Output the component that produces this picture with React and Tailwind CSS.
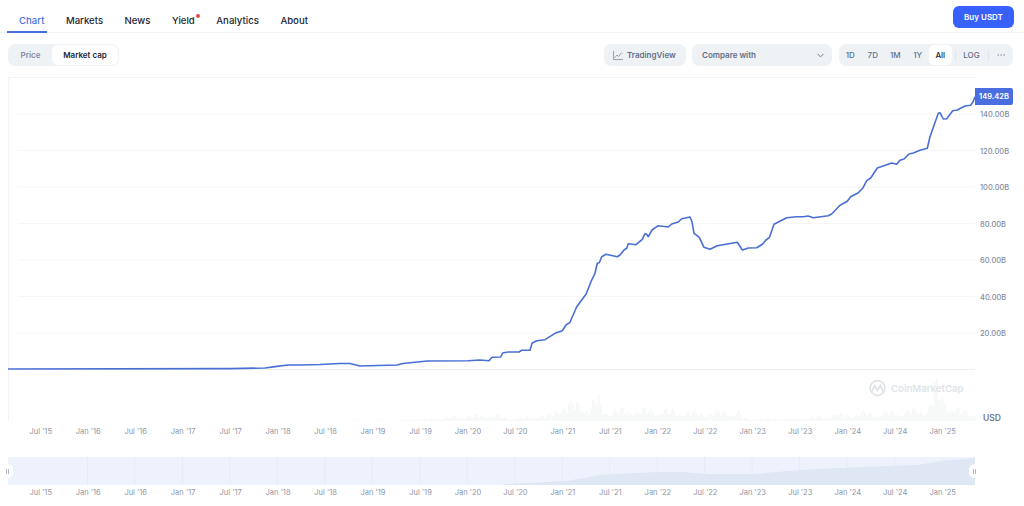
import { ChevronDown, Ellipsis } from 'lucide-react'

const tabs = ['Chart', 'Markets', 'News', 'Yield', 'Analytics', 'About']
const ranges = ['1D', '7D', '1M', '1Y', 'All']
const yLabels = ['140.00B', '120.00B', '100.00B', '80.00B', '60.00B', '40.00B', '20.00B']
const gridY = [114, 150.5, 187, 223.5, 260, 296.5, 333, 369.5]
const xLabels = [
  "Jul '15", "Jan '16", "Jul '16", "Jan '17", "Jul '17", "Jan '18", "Jul '18", "Jan '19", "Jul '19", "Jan '20",
  "Jul '20", "Jan '21", "Jul '21", "Jan '22", "Jul '22", "Jan '23", "Jul '23", "Jan '24", "Jul '24", "Jan '25",
]

// Market cap line, traced in page coordinates
const line =
  '8,369 230,368.6 265,368 275,366.6 288,365 300,365 320,364.5 340,363.5 350,363.5 360,366 397,365 403,363.5 427,361 468,360.7 ' +
  '480,360 489,360.7 492,357.3 500.7,357 502.7,353 508,352 519,352 521.7,350.3 530,350.3 532,343.3 536.7,340.7 545,339.7 555,333.3 ' +
  '562.3,330.7 566,325 570,322.3 576.7,306.7 586,294.3 591.7,280 595,273.3 597.3,263.3 599.3,262.7 601.7,256.7 606,254.3 617.3,256.7 ' +
  '620,255 624,250 626.7,248.3 628.3,243.7 636,244.7 642.3,239.3 645,233.7 646.7,234.3 648.3,236.7 652,230 658.3,225.7 668.3,227 ' +
  '671.7,224 678.3,222 681.7,218.7 690,217 692,221.7 694,233.3 699.3,237.3 704,247.3 710,249.3 717.3,245.7 737.3,242.3 742.3,250 ' +
  '748.3,248 756.7,247.7 760,245.7 762.7,244 766,240 769.3,237.7 774,224.3 786.7,217.7 796.7,216.7 803.3,216.7 808,216 813.3,217.7 ' +
  '828.3,215.7 831.7,214 840,205.3 847.3,201.3 850.7,196.7 858.3,192.7 862.7,188.3 866.7,180.7 870.7,178 877.3,168 891.7,163 ' +
  '896.7,164.3 900,160.3 904,159 909,154 913.3,153 920,150.3 927.3,148.3 930,136.7 938.3,113.3 940,112.7 943.3,119 946.7,118.7 ' +
  '952.7,110.7 957.3,110 965,106 970.7,105.3 973.3,101.3 975,96.7'

// Height of the volume envelope at a given x
const volumeStops = [
  [8, 0.3], [250, 0.4], [400, 1], [440, 4], [490, 9], [510, 3], [550, 8], [560, 20], [575, 24], [590, 18], [597, 36], [601, 14],
  [660, 14], [700, 11], [738, 12], [745, 3], [800, 3], [840, 9], [880, 11], [925, 15], [931, 30], [935, 48], [940, 32], [947, 25],
  [960, 13], [975, 12],
]

const volumeAt = (x) => {
  for (let i = 1; i < volumeStops.length; i++) {
    const [x0, h0] = volumeStops[i - 1]
    const [x1, h1] = volumeStops[i]
    if (x <= x1) return h0 + ((h1 - h0) * (x - x0)) / (x1 - x0)
  }
  return 0
}

const bars = []
for (let x = 8; x < 975; x += 2) {
  const wobble = 0.35 + 0.65 * Math.abs(Math.sin(x * 1.7) * Math.cos(x * 0.43))
  bars.push({ x, h: volumeAt(x) * wobble })
}

function Chart() {
  return (
    <svg viewBox="8 77 968 345" className="block w-[968px] h-[345px] shrink-0">
      <path d="M8.5 77.5H975.5M8.5 77.5V421.5" fill="none" stroke="#f1f3f6" />
      {gridY.map((y) => (
        <line key={y} x1="18" x2="975" y1={y} y2={y} stroke={y === 369.5 ? '#eef0f3' : '#f5f6f8'} />
      ))}
      {bars.map((b) => (
        <rect key={b.x} x={b.x} y={421 - b.h} width="1.6" height={b.h} fill="#f6f8f8" />
      ))}
      <g fill="none" stroke="#dde1e8" strokeWidth="1.6">
        <circle cx="877.5" cy="388" r="7.4" />
        <path d="M872 391.5l2.6-6 2.9 5 2.9-5 2.6 6" />
      </g>
      <text x="891" y="391.5" fontFamily="Inter, sans-serif" fontSize="9.6" fontWeight="600" fill="#e0e4ea">
        CoinMarketCap
      </text>
      <polyline points={line} fill="none" stroke="#4a6fd4" strokeWidth="1.6" strokeLinejoin="round" />
    </svg>
  )
}

function Navigator() {
  const ticks = []
  for (let x = 87.5; x < 975; x += 47.47) ticks.push(x)
  return (
    <svg viewBox="8 457 967 28" className="block w-[967px] h-[28px]">
      <rect x="8" y="457" width="967" height="28" fill="#eef2fc" />
      {ticks.map((x) => (
        <line key={x} x1={x} x2={x} y1="457" y2="485" stroke="#e6ebf5" />
      ))}
      <polygon
        points="500,485 507,484 567,481 600,475 657,472 684,472 704,474 754,474 801,470 861,467 917,465 940,461 975,458 975,485"
        fill="#dfe6f4"
      />
    </svg>
  )
}

function Handle({ className }) {
  return (
    <div className={`absolute top-[464px] w-[11px] h-[14px] rounded-full bg-white flex items-center justify-center gap-[1px] ${className}`}>
      <span className="w-[1px] h-[5px] bg-[#b4bac6]" />
      <span className="w-[1px] h-[5px] bg-[#b4bac6]" />
    </div>
  )
}

export default function App() {
  return (
    <div className="relative w-[1024px] h-[506px] overflow-hidden bg-white font-['Inter',sans-serif]">
      {/* Tabs */}
      <div className="flex h-[33px] items-start justify-between border-b border-[#f1f3f6] pr-[10px]">
        <div className="flex gap-[21.5px] pl-[19px] pt-[14px] text-[9.6px] font-medium leading-[13px]">
          {tabs.map((t) => (
            <div key={t} className={`relative ${t === 'Chart' ? 'text-[#4a6ee0]' : 'text-[#222531]'}`}>
              {t}
              {t === 'Chart' && <span className="absolute left-[-12px] right-[-3px] top-[17px] h-[1.5px] bg-[#4a6ee0]" />}
              {t === 'Yield' && <span className="absolute right-[-5px] top-0 w-[4px] h-[4px] rounded-full bg-[#e5484d]" />}
            </div>
          ))}
        </div>
        <button className="mt-[6px] h-[22px] w-[61px] rounded-[6px] bg-[#3861fb] text-white text-[8px] font-semibold">
          Buy USDT
        </button>
      </div>

      {/* Toolbar */}
      <div className="flex h-[22px] mt-[11px] pl-[8px] pr-[10px] text-[8px] font-semibold text-[#616e85]">
        <div className="flex w-[111px] rounded-[7px] bg-[#eff2f5] p-[1px]">
          <div className="flex items-center justify-center w-[43px] text-[#858ca2]">Price</div>
          <div className="flex flex-1 items-center justify-center rounded-[6px] bg-white text-[#222531]">Market cap</div>
        </div>
        <div className="flex items-center gap-[4px] ml-[485px] w-[82px] pl-[9px] rounded-[7px] bg-[#eff2f5]">
          <svg viewBox="0 0 10 9" className="w-[10px] h-[9px]" fill="none" stroke="#858ca2" strokeWidth="0.8">
            <path d="M.5 0v8.5H10M1.5 7l2.5-3 1.5 1.5L9 1.5" />
          </svg>
          TradingView
        </div>
        <div className="flex items-center justify-between ml-[6px] w-[140px] pl-[10px] pr-[6px] rounded-[7px] bg-[#eff2f5]">
          Compare with
          <ChevronDown className="w-[11px] h-[11px]" strokeWidth={2} />
        </div>
        <div className="flex items-center ml-[7px] w-[174px] rounded-[7px] bg-[#eff2f5] font-medium">
          {ranges.map((r) => (
            <div
              key={r}
              className={`flex items-center justify-center w-[22.5px] h-[20px] rounded-[5px] ${r === 'All' ? 'bg-white text-[#222531]' : ''}`}
            >
              {r}
            </div>
          ))}
          <span className="w-[1px] h-[9px] ml-[3px] bg-[#dfe3ea]" />
          <div className="flex items-center justify-center w-[32px]">LOG</div>
          <span className="w-[1px] h-[9px] bg-[#dfe3ea]" />
          <div className="flex flex-1 items-center justify-center text-[#a1a7bb]">
            <Ellipsis className="w-[10px] h-[10px]" />
          </div>
        </div>
      </div>

      {/* Main chart */}
      <div className="relative flex mt-[11px] pl-[8px] h-[345px]">
        <Chart />
        <div className="flex flex-col flex-1 pt-[19.5px] pl-[4px] text-[7.5px] font-medium text-[#858ca2]">
          {yLabels.map((l) => (
            <div key={l} className="flex items-center h-[36.5px] shrink-0">
              {l}
            </div>
          ))}
          <div className="mt-auto ml-[3px] h-[8px] leading-[8px] text-[8.5px] text-[#717a8c] font-semibold">USD</div>
        </div>
        <div className="absolute left-[975px] top-[11px] flex items-center justify-center w-[38px] h-[17px] rounded-r-[2px] bg-[#4a6ee0] text-white text-[7.5px] font-semibold">
          149.42B
        </div>
      </div>

      {/* X axis */}
      <div className="flex h-[20px] items-center pl-[17px] text-[7.5px] text-[#8f96a8]">
        {xLabels.map((l) => (
          <div key={l} className="w-[47.47px] shrink-0 text-center">
            {l}
          </div>
        ))}
      </div>

      {/* Range navigator */}
      <div className="mt-[15px] pl-[8px]">
        <Navigator />
      </div>
      <div className="flex h-[16px] items-center pl-[17px] text-[7.5px] text-[#8f96a8]">
        {xLabels.map((l) => (
          <div key={l} className="w-[47.47px] shrink-0 text-center">
            {l}
          </div>
        ))}
      </div>
      <Handle className="left-[2px]" />
      <Handle className="left-[969px]" />
    </div>
  )
}
